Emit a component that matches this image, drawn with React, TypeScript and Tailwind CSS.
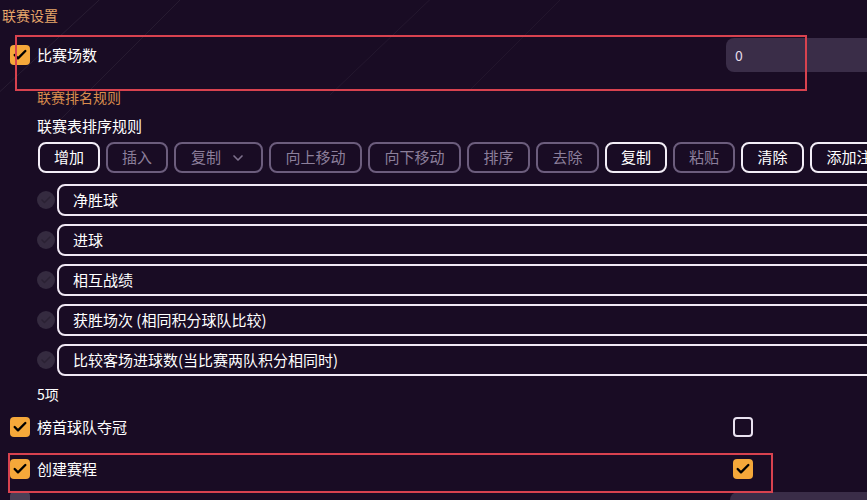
import { Check, ChevronDown } from "lucide-react";

type Btn = { label: string; enabled: boolean; width: string; dropdown?: boolean };

const buttons: Btn[] = [
  { label: "增加", enabled: true, width: "w-[62px]" },
  { label: "插入", enabled: false, width: "w-[62px]" },
  { label: "复制", enabled: false, width: "w-[89px]", dropdown: true },
  { label: "向上移动", enabled: false, width: "w-[93px]" },
  { label: "向下移动", enabled: false, width: "w-[93px]" },
  { label: "排序", enabled: false, width: "w-[63px]" },
  { label: "去除", enabled: false, width: "w-[63px]" },
  { label: "复制", enabled: true, width: "w-[62px]" },
  { label: "粘贴", enabled: false, width: "w-[62px]" },
  { label: "清除", enabled: true, width: "w-[63px]" },
  { label: "添加注释", enabled: true, width: "w-[93px]" },
];

const rules = [
  "净胜球",
  "进球",
  "相互战绩",
  "获胜场次 (相同积分球队比较)",
  "比较客场进球数(当比赛两队积分相同时)",
];

function CheckBox({ checked }: { checked: boolean }) {
  if (!checked) {
    return <div className="w-5 h-5 shrink-0 rounded-[4px] border-2 border-[#e9e2f0]" />;
  }
  return (
    <div className="w-5 h-5 shrink-0 rounded-[4px] bg-[#f5a83a] flex items-center justify-center">
      <Check className="w-4 h-4 text-black" strokeWidth={3.5} />
    </div>
  );
}

function App() {
  return (
    <div
      className="relative w-[867px] h-[500px] overflow-hidden bg-[#190c24] text-white"
      style={{ fontFamily: '"Noto Sans CJK SC", "Noto Sans", sans-serif' }}
    >
      {/* faint diagonal streaks in the background */}
      <svg className="absolute inset-0 pointer-events-none" width="867" height="500">
        <line x1="-20" y1="110" x2="110" y2="-10" stroke="#ffffff" strokeOpacity="0.07" strokeWidth="1" />
        <line x1="60" y1="120" x2="190" y2="-10" stroke="#ffffff" strokeOpacity="0.06" strokeWidth="1" />
        <line x1="330" y1="95" x2="440" y2="-10" stroke="#ffffff" strokeOpacity="0.05" strokeWidth="1" />
        <line x1="470" y1="90" x2="570" y2="-10" stroke="#ffffff" strokeOpacity="0.04" strokeWidth="1" />
      </svg>

      <div className="relative flex flex-col">
        <div className="h-[30px] flex items-center pl-[2px] text-[14px] text-[#e6a66a]">联赛设置</div>

        <div className="h-[50px] flex items-center pl-[10px] gap-[7px]">
          <CheckBox checked />
          <span className="text-[15px] flex-1">比赛场数</span>
          <div className="w-[141px] h-[34px] self-center rounded-l-lg bg-[#3a2d48] flex items-center pl-[9px] text-[14px] text-[#e4dce9]">
            0
          </div>
        </div>

        <div className="h-[34px] flex items-center pl-[37px] text-[14px] text-[#d98c4e]">联赛排名规则</div>
        <div className="h-[24px] flex items-center pl-[37px] text-[15px]">联赛表排序规则</div>

        <div className="mt-[4px] flex gap-[6px] pl-[38px] whitespace-nowrap">
          {buttons.map((b, i) => (
            <div
              key={i}
              className={`${b.width} h-[31px] shrink-0 flex items-center justify-center gap-[9px] rounded-lg border-2 text-[15px] ${
                b.enabled ? "border-[#f3eef7] text-white" : "border-[#6c5d7d] text-[#8c7f9b]"
              }`}
            >
              {b.label}
              {b.dropdown && <ChevronDown className="w-4 h-4 text-[#7d708c]" strokeWidth={2.5} />}
            </div>
          ))}
        </div>

        <div className="mt-[11px] flex flex-col gap-[8px] pl-[37px]">
          {rules.map((r) => (
            <div key={r} className="flex items-center gap-[2px]">
              <div className="w-[18px] h-[18px] shrink-0 rounded-full bg-[#352b40] flex items-center justify-center">
                <Check className="w-3 h-3 text-[#2a2133]" strokeWidth={3} />
              </div>
              <div className="h-[32px] w-[860px] shrink-0 rounded-lg border-2 border-[#f1e9f5] flex items-center pl-[14px] text-[15px] whitespace-nowrap">
                {r}
              </div>
            </div>
          ))}
        </div>

        <div className="h-[36px] flex items-center pl-[37px] text-[14px]">5项</div>

        <div className="h-[30px] flex items-center pl-[10px] gap-[7px]">
          <CheckBox checked />
          <span className="text-[15px] w-[689px]">榜首球队夺冠</span>
          <CheckBox checked={false} />
        </div>

        <div className="h-[40px] mt-[7px] flex items-center pl-[10px] gap-[7px]">
          <CheckBox checked />
          <span className="text-[15px] w-[689px]">创建赛程</span>
          <CheckBox checked />
        </div>

        <div className="h-[30px] flex items-start pl-[10px] pt-[3px]">
          <div className="w-5 h-5 rounded-[4px] bg-[#4a3f56]" />
          <div className="ml-auto w-[137px] h-[30px] rounded-l-lg bg-[#3a2d48]" />
        </div>
      </div>

      {/* red annotation frames */}
      <div className="absolute left-[15px] top-[35px] w-[792px] h-[56px] border-2 border-[#d8424f] pointer-events-none" />
      <div className="absolute left-[8px] top-[453px] w-[765px] h-[40px] border-2 border-[#d8424f] pointer-events-none" />
    </div>
  );
}

export default App;
